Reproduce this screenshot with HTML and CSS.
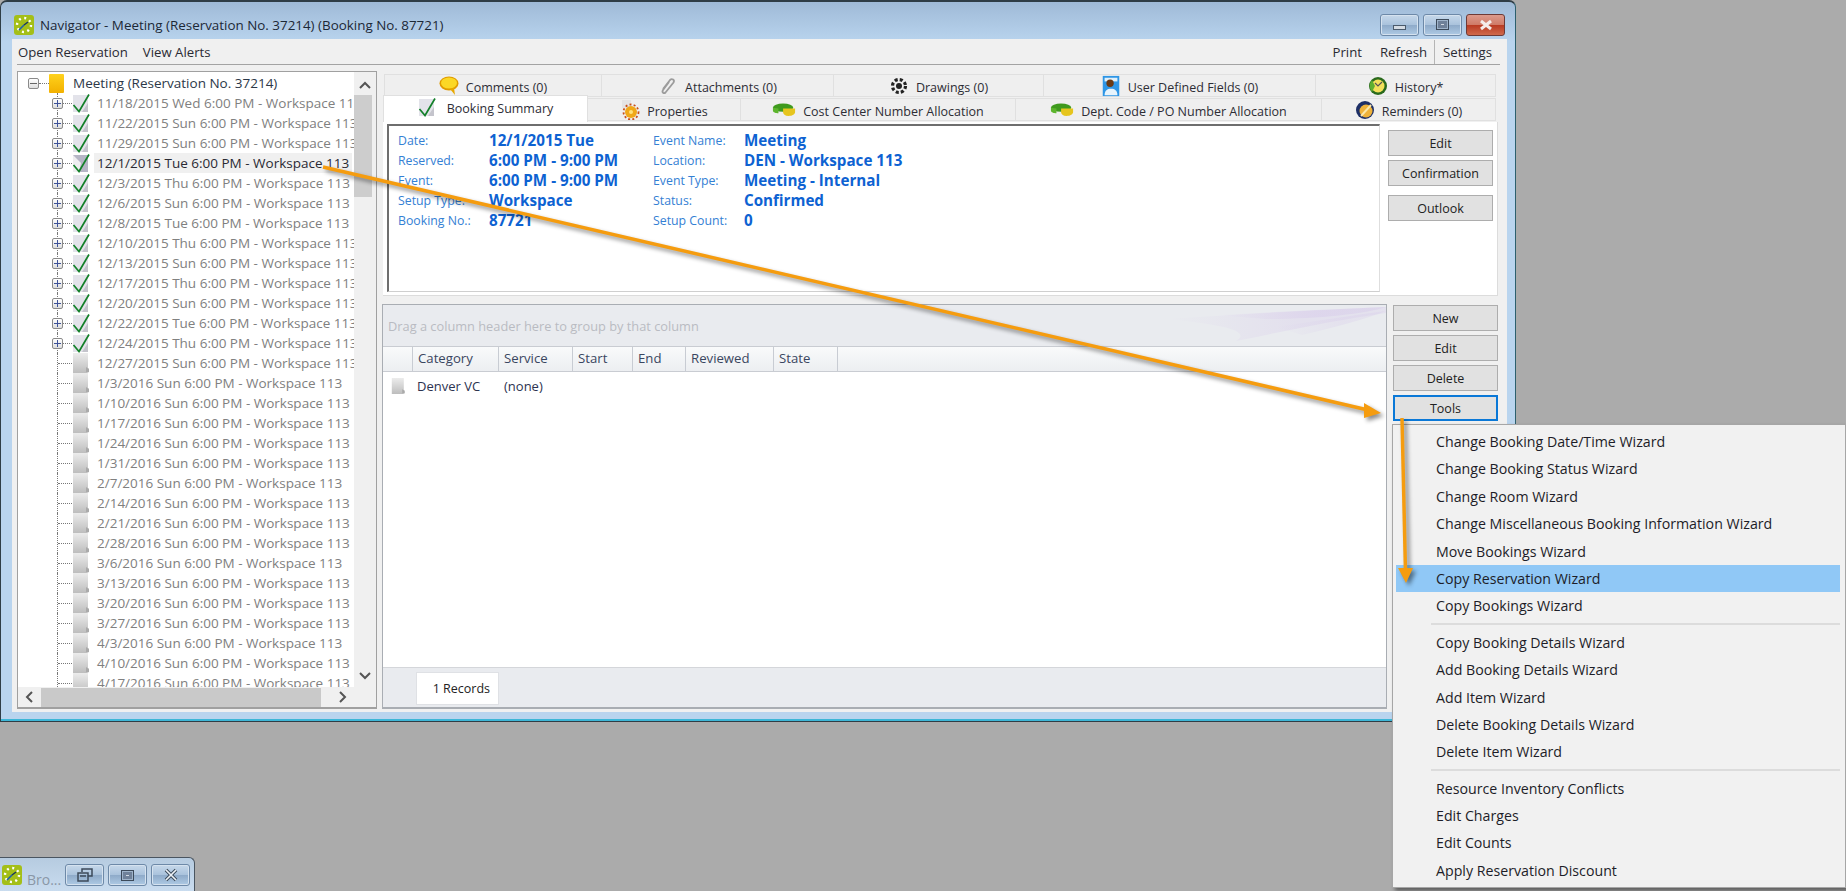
FILE: index.html
```html
<!DOCTYPE html>
<html lang="en">
<head>
    <meta charset="UTF-8">
    <title>Navigator - Meeting</title>
    <link rel="stylesheet" href="styles.css">
</head>
<body>
    <svg class="defs" width="0" height="0">
        <defs>
            <linearGradient id="grayDoc" x1="0" y1="0" x2="0" y2="1">
                <stop offset="0" stop-color="#ececec"/>
                <stop offset="1" stop-color="#bdbdbd"/>
            </linearGradient>
            <linearGradient id="yellow" x1="0" y1="0" x2="0" y2="1">
                <stop offset="0" stop-color="#ffd21c"/>
                <stop offset="1" stop-color="#f2b000"/>
            </linearGradient>
            <linearGradient id="wisp" x1="0" y1="0" x2="1" y2="0">
                <stop offset="0" stop-color="#d6c8ea" stop-opacity="0"/>
                <stop offset="0.6" stop-color="#d6c8ea" stop-opacity="0.7"/>
                <stop offset="1" stop-color="#d0c0e8" stop-opacity="0.5"/>
            </linearGradient>
            <symbol id="doc" viewBox="0 0 20 20">
                <path d="M1 0h15v15l1 1v3l-2 1H1z" fill="url(#grayDoc)"/>
                <path d="M14 14l3 2v3h-3z" fill="#aaa"/>
            </symbol>
            <symbol id="doc-check" viewBox="0 0 20 20">
                <path d="M1 2h15v17H1z" fill="#e3e3ea"/>
                <path d="M16 10v9h-6z" fill="#c4c4cc"/>
                <path d="M1.5 12l5.5 6.500L17 1.500" fill="none" stroke="#14802a" stroke-width="1.700"/>
            </symbol>
            <symbol id="doc-open" viewBox="0 0 20 20">
                <path d="M1 2h15v17H1z" fill="#b6b6c6"/>
                <path d="M1 2l8 8-2 9H1z" fill="#eeeef0"/>
                <path d="M1.5 12l5.5 6.500L17 1.500" fill="none" stroke="#14802a" stroke-width="1.700"/>
            </symbol>
            <symbol id="app" viewBox="0 0 20 20">
                <rect width="20" height="20" rx="3" fill="#a4bf18"/>
                <circle cx="10" cy="10" r="7" fill="none" stroke="#fff" stroke-width="2.400" stroke-dasharray="2 3.500"/>
                <path d="M5 15l5-5" stroke="#1f5fa8" stroke-width="1.600"/>
                <path d="M10 10l4-3" stroke="#16345e" stroke-width="1.400"/>
            </symbol>
            <symbol id="bubble" viewBox="0 0 20 20">
                <ellipse cx="10" cy="7.500" rx="9.500" ry="7" fill="#e09b00"/>
                <ellipse cx="10" cy="7" rx="8" ry="5.500" fill="#fbd826"/>
                <path d="M11 13l5 6-1-7z" fill="#e8a800"/>
            </symbol>
            <symbol id="clip" viewBox="0 0 20 20">
                <path d="M5 13l7-9c2-2 5 0 3.500 2.500l-8 10c-1.500 1.500-4 0-2.500-2.500l6-8" fill="none" stroke="#9c9c9c" stroke-width="1.800"/>
            </symbol>
            <symbol id="flower" viewBox="0 0 20 20">
                <circle cx="10" cy="10" r="3" fill="#222"/>
                <circle cx="10" cy="10" r="6.500" fill="none" stroke="#222" stroke-width="3.200" stroke-dasharray="3 2.100"/>
            </symbol>
            <symbol id="person" viewBox="0 0 20 24">
                <rect x="1" y="1" width="18" height="22" fill="#2e96e6"/>
                <rect x="3" y="3" width="14" height="4" fill="#dff0fb"/>
                <circle cx="9" cy="9" r="4" fill="#6b3a14"/>
                <path d="M3 22c0-5 3-7 7-7s7 2 7 7z" fill="#e8f4fc"/>
            </symbol>
            <symbol id="history" viewBox="0 0 20 20">
                <circle cx="10" cy="10" r="9" fill="#2a6a1c"/>
                <circle cx="10" cy="10" r="6.500" fill="#f3e05a"/>
                <path d="M4 16a9 9 0 0 1 0-12l3 6z" fill="#5fb030"/>
                <path d="M7 7l3 3 4-4" fill="none" stroke="#555" stroke-width="1.200"/>
            </symbol>
            <symbol id="gear-doc" viewBox="0 0 20 20">
                <path d="M2 0h9v8H2z" fill="#e4e4e4"/>
                <circle cx="11" cy="12" r="6" fill="#f0a818"/>
                <circle cx="11" cy="12" r="7.500" fill="none" stroke="#c8501a" stroke-width="1.800" stroke-dasharray="2 2.200"/>
                <circle cx="11" cy="12" r="2" fill="#ffe27a"/>
            </symbol>
            <symbol id="coins" viewBox="0 0 26 14">
                <ellipse cx="12" cy="5" rx="11" ry="4.500" fill="#3f9a1e"/>
                <path d="M12 6h13v4c0 2-3 4-7 4s-6-2-6-4z" fill="#e6c51e"/>
                <path d="M1 5v3c0 2 3 3 6 3V6z" fill="#5db52d"/>
            </symbol>
            <symbol id="reminder" viewBox="0 0 20 20">
                <circle cx="10" cy="10" r="9" fill="#1d2f66"/>
                <circle cx="11" cy="11" r="6.500" fill="#eeb23a"/>
                <path d="M6 16L16 5" stroke="#fbe7a8" stroke-width="2"/>
            </symbol>
            <symbol id="win-close" viewBox="0 0 16 12">
                <path d="M3 2l10 8M13 2L3 10" stroke="currentColor" stroke-width="3"/>
            </symbol>
            <symbol id="mini-close" viewBox="0 0 16 14">
                <path d="M3 2l10 10M13 2L3 12" stroke="#3c4a5a" stroke-width="3.600"/>
                <path d="M3 2l10 10M13 2L3 12" stroke="#eef3f8" stroke-width="1.600"/>
            </symbol>
        </defs>
    </svg>

    <div class="window">
        <div class="titlebar">
            <svg class="app-icon"><use href="#app"/></svg>
            <span class="title">Navigator - Meeting (Reservation No. 37214) (Booking No. 87721)</span>
            <div class="caption-btns">
                <span class="cap-btn"><i class="min-glyph"></i></span>
                <span class="cap-btn"><i class="max-glyph"></i></span>
                <span class="cap-btn close"><svg width="16" height="12"><use href="#win-close"/></svg></span>
            </div>
        </div>

        <div class="client">
            <div class="menubar">
                <span class="menu-link">Open Reservation</span>
                <span class="menu-link">View Alerts</span>
                <span class="menu-link push">Print</span>
                <span class="menu-link">Refresh</span>
                <span class="menu-link divided">Settings</span>
            </div>

            <div class="main">
                <div class="tree">
                    <div class="tree-rows">
                        <div class="root-row">
                            <i class="box minus"></i>
                            <i class="root-stub"></i>
                            <svg class="folder" width="15" height="19"><rect width="15" height="19" rx="1" fill="url(#yellow)"/></svg>
                            <span>Meeting (Reservation No. 37214)</span>
                        </div>
                        <div class="row"><div class="branch"><i class="box plus"></i><i class="stub"></i></div><svg class="ico"><use href="#doc-check"/></svg><span class="lbl">11/18/2015 Wed 6:00 PM - Workspace 113</span></div>
                        <div class="row"><div class="branch"><i class="box plus"></i><i class="stub"></i></div><svg class="ico"><use href="#doc-check"/></svg><span class="lbl">11/22/2015 Sun 6:00 PM - Workspace 113</span></div>
                        <div class="row"><div class="branch"><i class="box plus"></i><i class="stub"></i></div><svg class="ico"><use href="#doc-check"/></svg><span class="lbl">11/29/2015 Sun 6:00 PM - Workspace 113</span></div>
                        <div class="row current"><div class="branch"><i class="box plus"></i><i class="stub"></i></div><svg class="ico"><use href="#doc-open"/></svg><span class="lbl">12/1/2015 Tue 6:00 PM - Workspace 113</span></div>
                        <div class="row"><div class="branch"><i class="box plus"></i><i class="stub"></i></div><svg class="ico"><use href="#doc-check"/></svg><span class="lbl">12/3/2015 Thu 6:00 PM - Workspace 113</span></div>
                        <div class="row"><div class="branch"><i class="box plus"></i><i class="stub"></i></div><svg class="ico"><use href="#doc-check"/></svg><span class="lbl">12/6/2015 Sun 6:00 PM - Workspace 113</span></div>
                        <div class="row"><div class="branch"><i class="box plus"></i><i class="stub"></i></div><svg class="ico"><use href="#doc-check"/></svg><span class="lbl">12/8/2015 Tue 6:00 PM - Workspace 113</span></div>
                        <div class="row"><div class="branch"><i class="box plus"></i><i class="stub"></i></div><svg class="ico"><use href="#doc-check"/></svg><span class="lbl">12/10/2015 Thu 6:00 PM - Workspace 113</span></div>
                        <div class="row"><div class="branch"><i class="box plus"></i><i class="stub"></i></div><svg class="ico"><use href="#doc-check"/></svg><span class="lbl">12/13/2015 Sun 6:00 PM - Workspace 113</span></div>
                        <div class="row"><div class="branch"><i class="box plus"></i><i class="stub"></i></div><svg class="ico"><use href="#doc-check"/></svg><span class="lbl">12/17/2015 Thu 6:00 PM - Workspace 113</span></div>
                        <div class="row"><div class="branch"><i class="box plus"></i><i class="stub"></i></div><svg class="ico"><use href="#doc-check"/></svg><span class="lbl">12/20/2015 Sun 6:00 PM - Workspace 113</span></div>
                        <div class="row"><div class="branch"><i class="box plus"></i><i class="stub"></i></div><svg class="ico"><use href="#doc-check"/></svg><span class="lbl">12/22/2015 Tue 6:00 PM - Workspace 113</span></div>
                        <div class="row"><div class="branch"><i class="box plus"></i><i class="stub"></i></div><svg class="ico"><use href="#doc-check"/></svg><span class="lbl">12/24/2015 Thu 6:00 PM - Workspace 113</span></div>
                        <div class="row"><div class="branch"><i class="stub"></i></div><svg class="ico"><use href="#doc"/></svg><span class="lbl">12/27/2015 Sun 6:00 PM - Workspace 113</span></div>
                        <div class="row"><div class="branch"><i class="stub"></i></div><svg class="ico"><use href="#doc"/></svg><span class="lbl">1/3/2016 Sun 6:00 PM - Workspace 113</span></div>
                        <div class="row"><div class="branch"><i class="stub"></i></div><svg class="ico"><use href="#doc"/></svg><span class="lbl">1/10/2016 Sun 6:00 PM - Workspace 113</span></div>
                        <div class="row"><div class="branch"><i class="stub"></i></div><svg class="ico"><use href="#doc"/></svg><span class="lbl">1/17/2016 Sun 6:00 PM - Workspace 113</span></div>
                        <div class="row"><div class="branch"><i class="stub"></i></div><svg class="ico"><use href="#doc"/></svg><span class="lbl">1/24/2016 Sun 6:00 PM - Workspace 113</span></div>
                        <div class="row"><div class="branch"><i class="stub"></i></div><svg class="ico"><use href="#doc"/></svg><span class="lbl">1/31/2016 Sun 6:00 PM - Workspace 113</span></div>
                        <div class="row"><div class="branch"><i class="stub"></i></div><svg class="ico"><use href="#doc"/></svg><span class="lbl">2/7/2016 Sun 6:00 PM - Workspace 113</span></div>
                        <div class="row"><div class="branch"><i class="stub"></i></div><svg class="ico"><use href="#doc"/></svg><span class="lbl">2/14/2016 Sun 6:00 PM - Workspace 113</span></div>
                        <div class="row"><div class="branch"><i class="stub"></i></div><svg class="ico"><use href="#doc"/></svg><span class="lbl">2/21/2016 Sun 6:00 PM - Workspace 113</span></div>
                        <div class="row"><div class="branch"><i class="stub"></i></div><svg class="ico"><use href="#doc"/></svg><span class="lbl">2/28/2016 Sun 6:00 PM - Workspace 113</span></div>
                        <div class="row"><div class="branch"><i class="stub"></i></div><svg class="ico"><use href="#doc"/></svg><span class="lbl">3/6/2016 Sun 6:00 PM - Workspace 113</span></div>
                        <div class="row"><div class="branch"><i class="stub"></i></div><svg class="ico"><use href="#doc"/></svg><span class="lbl">3/13/2016 Sun 6:00 PM - Workspace 113</span></div>
                        <div class="row"><div class="branch"><i class="stub"></i></div><svg class="ico"><use href="#doc"/></svg><span class="lbl">3/20/2016 Sun 6:00 PM - Workspace 113</span></div>
                        <div class="row"><div class="branch"><i class="stub"></i></div><svg class="ico"><use href="#doc"/></svg><span class="lbl">3/27/2016 Sun 6:00 PM - Workspace 113</span></div>
                        <div class="row"><div class="branch"><i class="stub"></i></div><svg class="ico"><use href="#doc"/></svg><span class="lbl">4/3/2016 Sun 6:00 PM - Workspace 113</span></div>
                        <div class="row"><div class="branch"><i class="stub"></i></div><svg class="ico"><use href="#doc"/></svg><span class="lbl">4/10/2016 Sun 6:00 PM - Workspace 113</span></div>
                        <div class="row"><div class="branch"><i class="stub"></i></div><svg class="ico"><use href="#doc"/></svg><span class="lbl">4/17/2016 Sun 6:00 PM - Workspace 113</span></div>
                    </div>
                    <div class="vscroll">
                        <svg width="14" height="10"><path d="M2 8l5-5 5 5" fill="none" stroke="#555" stroke-width="2"/></svg>
                        <div class="vthumb"></div>
                        <svg class="vdown" width="14" height="10"><path d="M2 2l5 5 5-5" fill="none" stroke="#555" stroke-width="2"/></svg>
                    </div>
                    <div class="hscroll">
                        <svg width="10" height="14"><path d="M8 2L3 7l5 5" fill="none" stroke="#555" stroke-width="2"/></svg>
                        <div class="hthumb"></div>
                        <svg class="hright" width="10" height="14"><path d="M2 2l5 5-5 5" fill="none" stroke="#555" stroke-width="2"/></svg>
                    </div>
                    <div class="corner"></div>
                </div>

                <div class="right">
                    <div class="tabs top-tabs">
                        <div class="tab"><svg class="tab-ico"><use href="#bubble"/></svg>Comments (0)</div>
                        <div class="tab"><svg class="tab-ico"><use href="#clip"/></svg>Attachments (0)</div>
                        <div class="tab"><svg class="tab-ico"><use href="#flower"/></svg>Drawings (0)</div>
                        <div class="tab"><svg class="tab-ico tall"><use href="#person"/></svg>User Defined Fields (0)</div>
                        <div class="tab"><svg class="tab-ico"><use href="#history"/></svg>History*</div>
                    </div>
                    <div class="tabs bottom-tabs">
                        <div class="tab active"><svg class="tab-ico"><use href="#doc-check"/></svg>Booking Summary</div>
                        <div class="tab"><svg class="tab-ico"><use href="#gear-doc"/></svg>Properties</div>
                        <div class="tab"><svg class="tab-ico wide"><use href="#coins"/></svg>Cost Center Number Allocation</div>
                        <div class="tab"><svg class="tab-ico wide"><use href="#coins"/></svg>Dept. Code / PO Number Allocation</div>
                        <div class="tab"><svg class="tab-ico"><use href="#reminder"/></svg>Reminders (0)</div>
                    </div>

                    <div class="summary">
                        <div class="inset">
                            <span class="k">Date:</span><span class="v">12/1/2015 Tue</span><span class="k">Event Name:</span><span class="v">Meeting</span>
                            <span class="k">Reserved:</span><span class="v">6:00 PM - 9:00 PM</span><span class="k">Location:</span><span class="v">DEN - Workspace 113</span>
                            <span class="k">Event:</span><span class="v">6:00 PM - 9:00 PM</span><span class="k">Event Type:</span><span class="v">Meeting - Internal</span>
                            <span class="k">Setup Type:</span><span class="v">Workspace</span><span class="k">Status:</span><span class="v">Confirmed</span>
                            <span class="k">Booking No.:</span><span class="v">87721</span><span class="k">Setup Count:</span><span class="v">0</span>
                        </div>
                        <div class="summary-btns">
                            <button class="btn">Edit</button>
                            <button class="btn">Confirmation</button>
                            <button class="btn outlook">Outlook</button>
                        </div>
                    </div>

                    <div class="lower">
                        <div class="grid">
                            <div class="group-panel">
                                <span>Drag a column header here to group by that column</span>
                                <svg class="swirl" width="220" height="41" viewBox="0 0 220 41">
                                    <path d="M0 14C60 10 150 5 220 2v6C170 15 120 26 70 36C90 24 40 18 0 14z" fill="url(#wisp)" opacity=".45"/>
                                    <path d="M50 10C110 7 170 4 220 2c-20 7-70 12-120 12z" fill="url(#wisp)" opacity=".6"/>
                                    <path d="M110 22C150 16 190 10 220 6c-20 8-50 16-84 24z" fill="url(#wisp)" opacity=".4"/>
                                </svg>
                            </div>
                            <div class="col-head">
                                <span></span><span>Category</span><span>Service</span><span>Start</span><span>End</span><span>Reviewed</span><span>State</span><em></em>
                            </div>
                            <div class="col-row">
                                <svg width="16" height="20"><use href="#doc"/></svg><span>Denver VC</span><span>(none)</span>
                            </div>
                            <div class="grid-foot"><div class="records">1 Records</div></div>
                        </div>
                        <div class="grid-btns">
                            <button class="btn">New</button>
                            <button class="btn">Edit</button>
                            <button class="btn">Delete</button>
                            <button class="btn focused">Tools</button>
                        </div>
                    </div>
                </div>
            </div>
        </div>
    </div>

    <div class="mini-window">
        <svg class="mini-icon"><use href="#app"/></svg>
        <span class="mini-title">Bro...</span>
        <span class="cap-btn"><svg width="16" height="14" viewBox="0 0 16 14"><path d="M5 4V1h10v7h-4M1 5h10v8H1zM3 8h6" fill="none" stroke="#3c4a5a" stroke-width="1.500"/></svg></span>
        <span class="cap-btn"><i class="max-glyph"></i></span>
        <span class="cap-btn"><svg width="16" height="14"><use href="#mini-close"/></svg></span>
    </div>

    <div class="popup">
        <div class="item">Change Booking Date/Time Wizard</div>
        <div class="item">Change Booking Status Wizard</div>
        <div class="item">Change Room Wizard</div>
        <div class="item">Change Miscellaneous Booking Information Wizard</div>
        <div class="item">Move Bookings Wizard</div>
        <div class="item hot">Copy Reservation Wizard</div>
        <div class="item">Copy Bookings Wizard</div>
        <div class="sep"></div>
        <div class="item">Copy Booking Details Wizard</div>
        <div class="item">Add Booking Details Wizard</div>
        <div class="item">Add Item Wizard</div>
        <div class="item">Delete Booking Details Wizard</div>
        <div class="item">Delete Item Wizard</div>
        <div class="sep"></div>
        <div class="item">Resource Inventory Conflicts</div>
        <div class="item">Edit Charges</div>
        <div class="item">Edit Counts</div>
        <div class="item">Apply Reservation Discount</div>
    </div>

    <!-- callout arrows drawn on top of the screenshot -->
    <svg class="arrows" width="1846" height="891" viewBox="0 0 1846 891">
        <g fill="#f59c0f" stroke="#f59c0f">
            <path d="M323 167L1368 410" stroke-width="3.500"/>
            <path d="M1364 403L1381 413L1364 418z" stroke="none"/>
            <path d="M1402 418L1405.500 572" stroke-width="3.500"/>
            <path d="M1398 568L1413 568L1406 583z" stroke="none"/>
        </g>
    </svg>
</body>
</html>
```

FILE: styles.css
```css
* {
    box-sizing: border-box;
}

body {
    margin: 0;
    width: 1846px;
    height: 891px;
    overflow: hidden;
    position: relative;
    display: flex;
    flex-direction: column;
    background-color: #ababab;
    font-family: "Open Sans", "Noto Sans", sans-serif;
    font-size: 12.5px;
    color: #222;
}

.defs {
    position: absolute;
}

i, em {
    display: block;
    font-style: normal;
}

/* main window */
.window {
    width: 1516px;
    height: 722px;
    flex: none;
    display: flex;
    flex-direction: column;
    padding: 0 8px 9px 11px;
    background: linear-gradient(#9fbad7, #b9d4ee 40px);
    border: 1px solid #2f3d46;
    border-top-width: 2px;
    border-right-color: #2c5f6d;
    border-radius: 7px 7px 0 0;
    box-shadow: inset 0 -2px 0 #3db6d6;
}

.titlebar {
    height: 37px;
    flex: none;
    display: flex;
    align-items: center;
    padding: 15px 0 7px 2px;
}

.app-icon {
    width: 20px;
    height: 20px;
    margin-right: 6px;
}

.title {
    font-size: 13.4px;
    color: #1c2836;
}

.caption-btns {
    margin-left: auto;
    margin-right: 2px;
    display: flex;
    gap: 4px;
}

.cap-btn {
    width: 39px;
    height: 22px;
    display: flex;
    align-items: center;
    justify-content: center;
    flex: none;
    border: 1px solid #6d89a8;
    border-radius: 3px;
    background: linear-gradient(#c6d8ea 0, #a9c2dc 50%, #8eaac9 51%, #aecae4 100%);
    box-shadow: inset 0 0 0 1px #d5e2ef;
    color: #3c4a5a;
}

.cap-btn.close {
    background: linear-gradient(#dc9a8c 0, #cf7a66 50%, #b93a22 51%, #cf6a4c 100%);
    border-color: #6e3a36;
    box-shadow: none;
    color: #f4ecea;
}

.min-glyph {
    width: 13px;
    height: 5px;
    margin-top: 5px;
    background: #d4dbe3;
    border: 1px solid #4a5a6c;
}

.max-glyph {
    width: 13px;
    height: 11px;
    background: #d4dbe3;
    border: 1px solid #3c4a5a;
    box-shadow: inset 0 0 0 1px #9fb4ca, inset 0 0 0 4px #6f8199;
}

.client {
    flex: 1;
    min-height: 0;
    display: flex;
    flex-direction: column;
    padding: 0 7px 3px 5px;
    background-color: #f0f0f0;
}

.menubar {
    height: 26px;
    flex: none;
    display: flex;
    align-items: center;
    padding: 0 0 0 1px;
    border-bottom: 1px solid #a3a3a3;
    gap: 15px;
    color: #2a2a33;
    font-size: 13.2px;
}

.menu-link.push {
    margin-left: auto;
    margin-right: 3px;
}

.menu-link.divided {
    border-left: 1px solid #b5b5b5;
    padding: 3px 8px 3px 8px;
    margin-left: -8px;
}

.main {
    flex: 1;
    min-height: 0;
    display: flex;
    gap: 5px;
    padding-top: 6px;
}

/* tree on the left */
.tree {
    width: 360px;
    flex: none;
    display: grid;
    grid-template-columns: 336px 22px;
    grid-template-rows: 1fr 20px;
    border: 1px solid #a0a0a0;
    border-bottom-width: 2px;
    background-color: #fff;
}

.tree-rows {
    overflow: hidden;
    padding-top: 1px;
    min-height: 0;
    min-width: 0;
    color: #808080;
    font-size: 13.5px;
}

.root-row, .row {
    height: 20px;
    display: flex;
    align-items: center;
    white-space: nowrap;
}

.root-row {
    padding-left: 10px;
    color: #2c3848;
    font-size: 13.5px;
}

.root-stub {
    width: 10px;
    flex: none;
    border-top: 1px dotted #777;
}

.folder {
    margin-right: 9px;
    flex: none;
}

.branch {
    width: 15px;
    height: 20px;
    margin-left: 39px;
    flex: none;
    display: flex;
    align-items: center;
    border-left: 1px dotted #777;
}

.stub {
    flex: 1;
    border-top: 1px dotted #777;
}

.box {
    width: 11px;
    height: 11px;
    flex: none;
    border: 1px solid #8a8a8a;
    border-radius: 2px;
}

.plus {
    margin-left: -6px;
    background:
        linear-gradient(#3d5299, #3d5299) center / 7px 1px no-repeat,
        linear-gradient(#3d5299, #3d5299) center / 1px 7px no-repeat,
        linear-gradient(#fff, #dedede);
}

.minus {
    background:
        linear-gradient(#666, #666) center / 7px 1px no-repeat,
        linear-gradient(#fff, #dedede);
}

.ico {
    width: 20px;
    height: 20px;
    flex: none;
}

.lbl {
    margin-left: 2px;
    padding-left: 3px;
    line-height: 20px;
}

.row.current .lbl {
    background-color: #f0f0f0;
    color: #2a2a33;
    padding-right: 3px;
}

.vscroll {
    background-color: #f0f0f0;
    display: flex;
    flex-direction: column;
    align-items: center;
    padding-top: 8px;
    padding-bottom: 6px;
}

.vthumb {
    width: 18px;
    height: 102px;
    margin: 5px 4px 0 0;
    background-color: #cdcdcd;
}

.vdown {
    margin-top: auto;
}

.hscroll {
    background-color: #f0f0f0;
    display: flex;
    align-items: center;
    padding-left: 6px;
    padding-right: 6px;
}

.hthumb {
    width: 280px;
    height: 19px;
    margin-left: 7px;
    background-color: #c9c9c9;
}

.hright {
    margin-left: auto;
}

.corner {
    background-color: #f0f0f0;
}

/* right side */
.right {
    flex: 1;
    min-width: 0;
    display: flex;
    flex-direction: column;
    padding-top: 3px;
}

.tabs {
    display: grid;
    flex: none;
    color: #2d2d35;
}

.top-tabs {
    height: 24px;
    margin-left: 2px;
    grid-template-columns: 218px 232px 210px 272px 180px;
}

.bottom-tabs {
    height: 24px;
    margin-left: 1px;
    grid-template-columns: 205px 153px 275px 306px 174px;
}

.tab {
    display: flex;
    align-items: center;
    justify-content: center;
    gap: 7px;
    height: 23px;
    padding-top: 3px;
    background-color: #efefef;
    border: 1px solid #e0e0e0;
    border-left-width: 0;
}

.tab:first-child {
    border-left-width: 1px;
}

.tab.active {
    height: 27px;
    margin-top: -3px;
    background-color: #fff;
    border-bottom: 0;
    gap: 9px;
    padding-top: 0;
    padding-bottom: 2px;
}

.tab-ico {
    width: 20px;
    height: 20px;
    flex: none;
    margin-top: -3px;
}

.tab-ico.tall {
    height: 22px;
}

.tab-ico.wide {
    width: 24px;
    height: 13px;
}

.summary {
    height: 174px;
    flex: none;
    display: flex;
    margin-left: 1px;
    margin-right: 2px;
    background-color: #fff;
    border-right: 1px solid #dcdcdc;
    border-bottom: 1px solid #dcdcdc;
}

.inset {
    width: 993px;
    height: 168px;
    margin: 2px 0 0 4px;
    padding: 4px 0 0 9px;
    display: grid;
    grid-template-columns: 91px 164px 91px 1fr;
    grid-auto-rows: 20px;
    align-items: center;
    border: 2px solid #6e6e6e;
    border-right: 1px solid #dedede;
    border-bottom: 1px solid #cfcfcf;
    font-size: 15.2px;
}

.k {
    color: #3480d4;
    font-size: 12.3px;
}

.v {
    color: #0d62d2;
    font-weight: 700;
}

.summary-btns {
    display: flex;
    flex-direction: column;
    gap: 4px;
    padding: 8px 0 0 8px;
}

.btn {
    width: 105px;
    height: 26px;
    padding: 0;
    font: inherit;
    color: #222;
    background-color: #e1e1e1;
    border: 1px solid #adadad;
}

.outlook {
    margin-top: 5px;
}

.lower {
    flex: 1;
    min-height: 0;
    display: flex;
    margin-top: 8px;
    gap: 6px;
}

.grid {
    width: 1005px;
    flex: none;
    display: flex;
    flex-direction: column;
    background-color: #fff;
    border: 1px solid #a9adb3;
    border-bottom-width: 2px;
}

.group-panel {
    height: 41px;
    flex: none;
    display: flex;
    align-items: center;
    justify-content: space-between;
    padding: 0 0 0 5px;
    background-color: #e9ebef;
    color: #b9bbc2;
    font-size: 12.8px;
}

.swirl {
    flex: none;
}

.col-head {
    height: 26px;
    flex: none;
    display: grid;
    grid-template-columns: 30px 86px 74px 60px 53px 88px 64px 1fr;
    background: linear-gradient(#f9fafb, #eceef1);
    border-top: 1px solid #c9ccd2;
    border-bottom: 1px solid #c9ccd2;
    color: #3a4660;
    font-size: 13.2px;
}

.col-head span {
    display: flex;
    align-items: center;
    padding: 0 0 3px 5px;
    border-right: 1px solid #c8ccd3;
}

.col-row {
    flex: 1;
    display: grid;
    grid-template-columns: 26px 87px 1fr;
    grid-auto-rows: 20px;
    align-items: center;
    padding: 4px 0 0 8px;
    color: #2c3350;
    font-size: 13px;
}

.grid-foot {
    height: 40px;
    flex: none;
    padding: 4px 0 2px 33px;
    background-color: #e9ebef;
    border-top: 1px solid #d4d6da;
}

.records {
    width: 83px;
    height: 33px;
    display: flex;
    align-items: center;
    justify-content: flex-end;
    padding-right: 8px;
    background-color: #fff;
    border: 1px solid #dfe1e5;
}

.grid-btns {
    display: flex;
    flex-direction: column;
    gap: 4px;
    padding-top: 1px;
}

.btn.focused {
    border: 2px solid #0a78d7;
}

/* minimized window at the bottom */
.mini-window {
    width: 195px;
    height: 34px;
    margin-top: auto;
    display: flex;
    align-items: flex-start;
    padding: 6px 0 0 2px;
    background: linear-gradient(#b6cbe0, #c9dcef);
    border: 1px solid #4a5560;
    border-bottom: 0;
    border-left: 0;
    border-radius: 0 6px 0 0;
}

.mini-icon {
    width: 20px;
    height: 20px;
    margin-top: 1px;
    flex: none;
}

.mini-title {
    width: 43px;
    padding: 6px 0 0 5px;
    font-size: 14px;
    color: #8a97a6;
}

.mini-window .cap-btn {
    margin-right: 4px;
}

/* Tools dropdown and arrows lie over the window */
.popup {
    position: absolute;
    left: 1392px;
    top: 424px;
    width: 454px;
    height: 464px;
    padding: 3px 5px 0 3px;
    background-color: #f1f1f1;
    border: 1px solid #a6a6a6;
    box-shadow: 3px 3px 4px rgba(0, 0, 0, 0.45);
    color: #1d1d28;
    font-size: 14.2px;
}

.item {
    height: 27.4px;
    line-height: 27.4px;
    padding-left: 40px;
}

.item.hot {
    background-color: #90c8f6;
}

.sep {
    height: 9px;
    margin-left: 35px;
    background: linear-gradient(#dcdcdc, #dcdcdc) center / 100% 2px no-repeat;
}

.arrows {
    position: absolute;
    left: 0;
    top: 0;
    pointer-events: none;
    filter: drop-shadow(3px 3px 2px rgba(0, 0, 0, 0.45));
}
```
